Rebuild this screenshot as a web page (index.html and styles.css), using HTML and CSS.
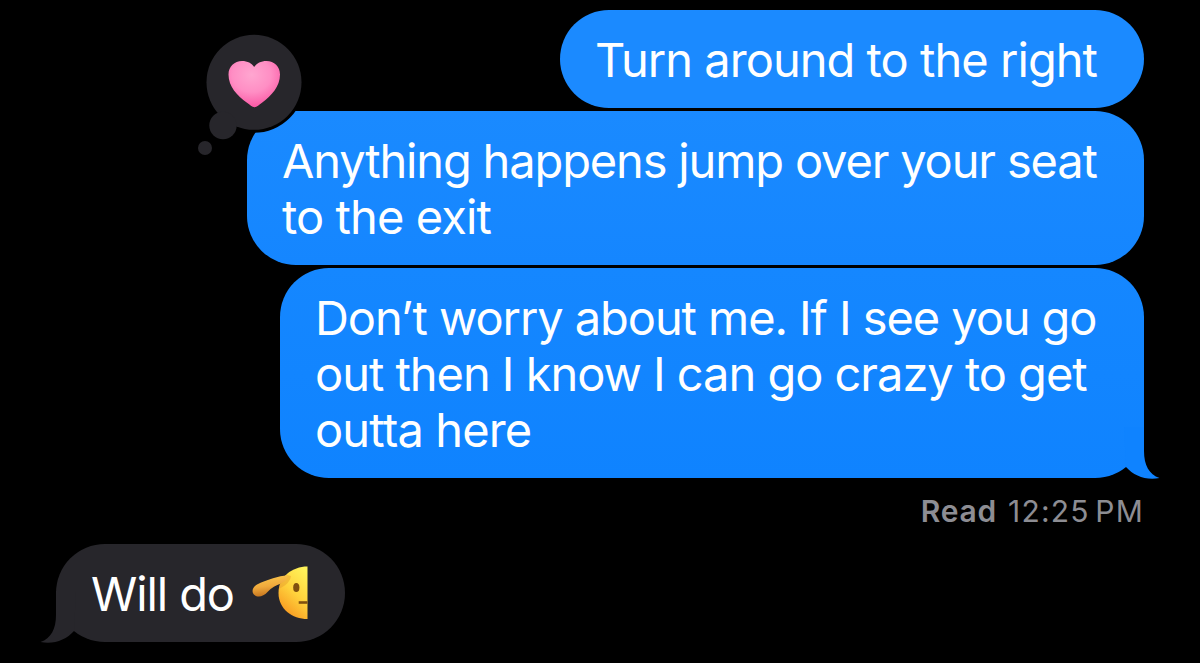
FILE: index.html
```html
<!DOCTYPE html>
<html lang="en">
<head>
  <meta charset="UTF-8" />
  <meta name="viewport" content="width=device-width, initial-scale=1.0"/>
  <title>Messages</title>
  <link rel="stylesheet" href="styles.css">
</head>
<body>

  <div class="chat">
    <!-- Sent messages -->
    <div class="bubble sent first">
      <span class="line l1">Turn around to the right</span>
    </div>

    <div class="bubble sent second">
      <span class="line l2">Anything happens jump over your seat</span>
      <span class="line l3">to the exit</span>

      <!-- Heart reaction -->
      <svg class="reaction" viewBox="0 0 120 130">
        <defs>
          <radialGradient id="heart" cx="0.45" cy="0.3" r="0.75">
            <stop offset="0" stop-color="#ffa6d0"/>
            <stop offset="0.5" stop-color="#ff8ec4"/>
            <stop offset="1" stop-color="#fa4f9f"/>
          </radialGradient>
        </defs>
        <circle cx="59" cy="54.3" r="50.5" fill="#000"/>
        <circle cx="59" cy="54.3" r="47.5" fill="#27262b"/>
        <circle cx="28" cy="97.5" r="13.7" fill="#27262b"/>
        <circle cx="10" cy="120" r="7" fill="#27262b"/>
        <path d="M59.5 79.2 C57 79 55 77 52 74.8 C42 67.5 33.5 58.5 33.5 46.5 C33.5 38.5 39.5 33 47 33 C52.5 33 56.8 35.3 59.2 39 C61.6 35.3 66 33 71.5 33 C79.2 33 85 38.5 85 46.5 C85 58.5 76.5 67.5 67 74.8 C64 77 62 79.2 59.5 79.2 Z" fill="url(#heart)"/>
      </svg>
    </div>

    <div class="bubble sent third">
      <span class="line l4">Don’t worry about me. If I see you go</span>
      <span class="line l5">out then I know I can go crazy to get</span>
      <span class="line l6">outta here</span>
      <svg class="tail" viewBox="0 0 36 52"><path d="M0 0 H20 V24 C20 38 25 47.5 35.5 51 C22 53.5 10 49 2 40 Z" fill="currentColor"/></svg>
    </div>

    <div class="receipt"><b>Read</b> <span class="time">12:25 PM</span></div>

    <!-- Received message -->
    <div class="bubble received">
      <span class="line l7">Will do</span>
      <svg class="salute" viewBox="0 0 56 54">
        <defs>
          <linearGradient id="face" x1="0.8" y1="0" x2="0.3" y2="1">
            <stop offset="0" stop-color="#fff35a"/>
            <stop offset="0.5" stop-color="#ffd23c"/>
            <stop offset="1" stop-color="#f7931e"/>
          </linearGradient>
          <linearGradient id="hand" x1="0.4" y1="0.1" x2="0.55" y2="0.9">
            <stop offset="0" stop-color="#f9c14a"/>
            <stop offset="0.5" stop-color="#f0aa3c"/>
            <stop offset="1" stop-color="#c97a22"/>
          </linearGradient>
        </defs>
        <path d="M55.5 0.5 C40 0.5 26.5 11 26.5 27 C26.5 43 40 53 55.5 53 Z" fill="url(#face)"/>
        <path d="M26.8 23 C27.5 17 30.5 12.500 35 9 L39 10 C38 16 33 20 26.8 23 Z" fill="#e59a2c" opacity="0.45"/>
        <path d="M2.5 29 C-0.5 26.500 -0.3 21.500 5 18.500 C9.500 16 15 14.200 21 12.300 C26 10.700 31 9.800 35.500 9.300 C36 13 33 16 29 17.500 C24 19.200 19.500 21.500 15.500 26 C11.500 30.500 6 32 2.500 29 Z" fill="url(#hand)"/>
        <ellipse cx="44.3" cy="21.5" rx="3.1" ry="4.6" fill="#80500f"/>
        <path d="M46.700 36.500 H55.500" stroke="#80500f" stroke-width="2.600"/>
      </svg>
      <svg class="tail" viewBox="0 0 36 52"><path d="M0 0 H20 V24 C20 38 25 47.5 35.5 51 C22 53.5 10 49 2 40 Z" fill="currentColor"/></svg>
    </div>
  </div>

</body>
</html>
```

FILE: styles.css
```css
* { box-sizing: border-box; }
body { margin: 0; background-color: #000; font-family: Inter, sans-serif; color: #fff; }

.chat { display: flex; flex-direction: column; gap: 3px; height: 663px; padding: 10px 56px 0; overflow: hidden; }
.bubble { position: relative; padding: 22px 35px 20px; border-radius: 49px; font-size: 47px; line-height: 56px; white-space: nowrap; }
.line { display: block; }
.l1 { letter-spacing: -0.96px; }
.l2 { letter-spacing: -1.15px; }
.l3 { letter-spacing: -0.9px; }
.l4 { letter-spacing: -1.08px; }
.l5 { letter-spacing: -1.03px; }
.l6 { letter-spacing: -0.85px; }
.l7 { letter-spacing: -1.1px; }

.sent { align-self: flex-end; }
.first { width: 584px; height: 98px; background-color: #1b8aff; }
.second { width: 897px; height: 154px; background: linear-gradient(#1a8aff, #1586ff); }
.third { width: 864px; height: 210px; background: linear-gradient(#1587ff, #0f83ff); }
.received { display: flex; align-items: center; align-self: flex-start; width: 289px; height: 98px; background-color: #27262b; }

.reaction { position: absolute; left: -52px; top: -83px; width: 120px; height: 130px; }
.tail { position: absolute; right: -16px; bottom: -1px; width: 36px; height: 52px; color: #0f83ff; }
.received .tail { right: auto; left: -16px; transform: scaleX(-1); color: #27262b; }

.receipt { display: flex; align-self: flex-end; gap: 11px; height: 60px; padding-top: 10px; font-size: 30px; line-height: 40px; color: #8d8d93; }
.receipt b { font-weight: 600; letter-spacing: 0.8px; }
.time { letter-spacing: 1.2px; word-spacing: -4px; }
.salute { flex: none; width: 56px; height: 54px; margin-left: 18px; margin-top: -2px; }
```
